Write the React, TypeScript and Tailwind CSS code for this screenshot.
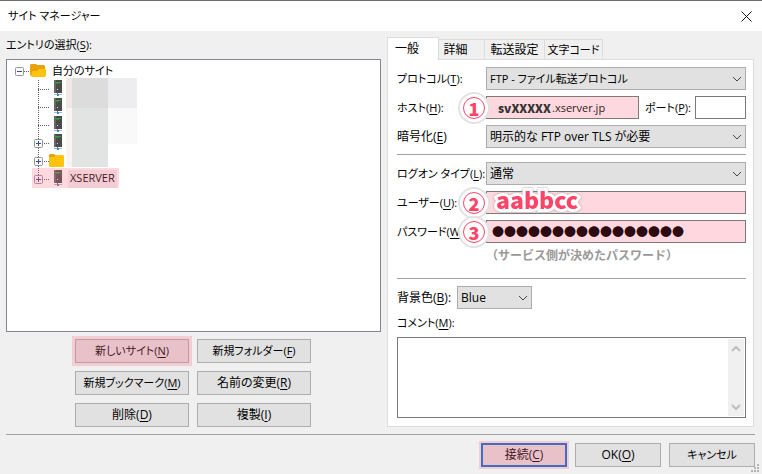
import type { ReactNode } from "react";

const PASSWORD = "●".repeat(16);

const Key = ({ children }: { children: string }) => (
  <>
    (<span className="underline underline-offset-2">{children}</span>)
  </>
);

const Mark = () => (
  <span className="pointer-events-none absolute -inset-1 bg-[#ff6482]/25" />
);

const Badge = ({ children }: { children: string }) => (
  <span className="absolute top-1/2 -left-7 z-10 flex size-8 -translate-y-1/2 items-center justify-center rounded-full border-2 border-[#e2e2e2] bg-white">
    <span className="flex size-[22px] items-center justify-center rounded-full border border-[#ff4468] font-['Noto_Sans_CJK_JP',sans-serif] text-[18px] leading-none font-black text-[#ff4468]">
      {children}
    </span>
  </span>
);

type SelectProps = { id: string; value: string; className?: string };

const Select = ({ id, value, className = "" }: SelectProps) => (
  <div className={`relative ${className}`}>
    <select
      id={id}
      className="block h-[23px] w-full appearance-none border border-[#adadad] bg-[#e1e1e1] pr-5 pl-[3px]"
    >
      <option>{value}</option>
    </select>
    <svg
      className="pointer-events-none absolute top-2 right-1 h-2 w-[10px]"
      viewBox="0 0 10 8"
      fill="none"
      stroke="#444"
    >
      <path d="M1 2l4 4 4-4" />
    </svg>
  </div>
);

type RowProps = {
  id: string;
  label: ReactNode;
  kana?: boolean;
  children: ReactNode;
};

const Row = ({ id, label, kana, children }: RowProps) => (
  <div className="flex h-[23px] items-center">
    <label
      htmlFor={id}
      className={`w-[89px] shrink-0 whitespace-nowrap ${kana ? "text-[11px]" : ""}`}
    >
      {label}
    </label>
    {children}
  </div>
);

type PushProps = {
  children: ReactNode;
  marked?: boolean;
  primary?: boolean;
  className?: string;
};

const PushButton = ({ children, marked, primary, className = "" }: PushProps) => (
  <button
    type="button"
    className={`relative h-6 whitespace-nowrap bg-[#e1e1e1] ${
      primary ? "border-2 border-[#0070d0]" : "border border-[#adadad]"
    } ${className}`}
  >
    {children}
    {marked && <Mark />}
  </button>
);

const ServerIcon = () => (
  <svg className="h-[18px] w-4" viewBox="0 0 16 18" shapeRendering="crispEdges">
    <path d="M4 0h8v13H4z" fill="#4b4b4b" />
    <path d="M4 0h2v13H4z" fill="#666" />
    <path d="M5 2h6v1H5z" fill="#35a13b" />
    <path d="M6 3h3v1H6z" fill="#2f8a35" />
    <path d="M7 9h1v1H7z" fill="#ddd" />
    <path d="M7 13h1v1H7z" fill="#777" />
    <path d="M4 14h8v1H4z" fill="#9bbdd4" />
    <path d="M7 14h2v2H7z" fill="#3e8cc4" />
  </svg>
);

const FolderIcon = () => (
  <svg className="-ml-px h-[18px] w-[17px]" viewBox="0 0 17 18">
    <path d="M0 3l1-1h4l1 1h7l1 1v10H0z" fill="#e8a30c" />
    <path d="M0 5h5l2-2h7l1 1v10l-1 1H1l-1-1z" fill="#ffc20e" />
  </svg>
);

const OpenFolderIcon = () => (
  <svg className="h-[18px] w-[17px]" viewBox="0 0 17 18">
    <path d="M0 3l1-1h5l1 1h7l1 1v10H1L0 13z" fill="#e8a30c" />
    <path d="M1 14l1-5h5l2-2h7v6l-1 2H2z" fill="#ffc20e" />
  </svg>
);

const Expander = ({ x, open }: { x: number; open?: boolean }) => (
  <g>
    <rect x={x + 0.5} y="5.5" width="8" height="8" rx="1" fill="#fafafa" stroke="#969696" />
    <path
      d={`M${x + 2} 9.500h5${open ? "" : `M${x + 4.5} 7v5`}`}
      stroke="#31519c"
    />
  </g>
);

type BranchProps = { expandable?: boolean; last?: boolean };

const Branch = ({ expandable, last }: BranchProps) => (
  <svg className="h-[18px] w-[18px]" viewBox="0 0 18 18">
    <path
      d={`M6.500 0v${last ? 10 : 18}M6 9.500h11`}
      stroke="#606060"
      strokeDasharray="1 1"
      fill="none"
    />
    {expandable && <Expander x={2} />}
  </svg>
);

const SiteTree = () => (
  <div className="relative h-[273px] border border-[#828790] bg-white pt-0.5 pl-2 text-[11px]">
    <div className="flex h-[18px] items-center">
      <svg className="h-[18px] w-[15px]" viewBox="0 0 15 18">
        <path d="M9 9.500h6" stroke="#606060" strokeDasharray="1 1" />
        <Expander x={0} open />
      </svg>
      <OpenFolderIcon />
      <span className="pl-[5px]">自分のサイト</span>
    </div>
    <ul className="pl-[17px]">
      {[false, false, false, true].map((expandable, i) => (
        <li key={i} className="flex h-[18px] items-center">
          <Branch expandable={expandable} />
          <ServerIcon />
        </li>
      ))}
      <li className="flex h-[18px] items-center">
        <Branch expandable />
        <FolderIcon />
      </li>
      <li className="relative flex h-[18px] w-[87px] items-center">
        <Branch expandable last />
        <ServerIcon />
        <span className="ml-0.5 bg-[#f0f0f0] px-0.5 pb-0.5 leading-4">XSERVER</span>
        <span className="pointer-events-none absolute inset-x-0 -top-0.5 bottom-0 bg-[#ff6482]/25" />
      </li>
    </ul>

    {/* Masked site names */}
    <div className="absolute top-[18px] left-[59px] grid grid-cols-[6px_36px_29px]">
      <span className="h-[30px] bg-[#f2e8e8]" />
      <span className="h-[30px] bg-[#dcdcdc]" />
      <span className="h-[30px] bg-[#ededef]" />
      <span className="h-[59px] bg-[#f7f4f2]" />
      <span className="h-[59px] bg-[#e2e4e3]" />
      <span className="h-9 bg-[#f9f9f9]" />
    </div>
  </div>
);

const Tabs = () => (
  <div className="flex h-[22px] items-end" role="tablist">
    <button
      type="button"
      role="tab"
      aria-selected="true"
      className="relative z-10 -mb-px h-[23px] w-[52px] border border-b-0 border-[#dcdcdc] bg-white pr-3"
    >
      一般
    </button>
    <button
      type="button"
      role="tab"
      className="h-5 w-[46px] border-t border-r border-[#dcdcdc] pr-3"
    >
      詳細
    </button>
    <button
      type="button"
      role="tab"
      className="h-5 w-[60px] border-t border-r border-[#dcdcdc] whitespace-nowrap"
    >
      転送設定
    </button>
    <button
      type="button"
      role="tab"
      className="h-5 w-[58px] border-t border-r border-[#dcdcdc] text-[11px] whitespace-nowrap"
    >
      文字コード
    </button>
  </div>
);

const GeneralPanel = () => (
  <div className="border border-[#dcdcdc] bg-white pt-[7px] pr-[7px] pb-2 pl-[9px]">
    <div className="flex flex-col gap-1.5">
      <Row id="protocol" kana label={<>プロトコル<Key>T</Key>:</>}>
        <Select
          id="protocol"
          value="FTP - ファイル転送プロトコル"
          className="flex-1 text-[11px]"
        />
      </Row>
      <Row id="host" kana label={<>ホスト<Key>H</Key>:</>}>
        <div className="relative min-w-0 flex-1">
          <Badge>1</Badge>
          <span className="pointer-events-none absolute top-0 left-3 font-['Noto_Sans_CJK_JP',sans-serif] text-[12px] leading-[23px] font-black text-[#333]">
            svXXXXX
          </span>
          <input
            id="host"
            defaultValue=".xserver.jp"
            className="block h-[23px] w-full border border-[#7a7a7a] bg-[#ffd8df] pl-[65px] text-[11px] text-[#2e1a20]"
          />
        </div>
        <label
          htmlFor="port"
          className="ml-1.5 w-[50px] shrink-0 text-[11px] whitespace-nowrap"
        >
          ポート<Key>P</Key>:
        </label>
        <input
          id="port"
          className="h-[23px] w-[51px] border border-[#7a7a7a] bg-white px-1"
        />
      </Row>
      <Row id="encryption" label={<>暗号化<Key>E</Key></>}>
        <Select id="encryption" value="明示的な FTP over TLS が必要" className="flex-1" />
      </Row>
    </div>

    <hr className="mt-1.5 mb-[7px] border-[#a0a0a0]" />

    <div className="flex flex-col gap-1.5">
      <Row id="logon" kana label={<>ログオン タイプ<Key>L</Key>:</>}>
        <Select id="logon" value="通常" className="flex-1" />
      </Row>
      <Row id="user" kana label={<>ユーザー<Key>U</Key>:</>}>
        <div className="relative flex-1">
          <Badge>2</Badge>
          <span className="pointer-events-none absolute -top-1 left-2.5 font-['Noto_Sans_CJK_JP',sans-serif] text-[23px] leading-6 font-black text-[#ff4468] drop-shadow-[0_0_1px_#999] [-webkit-text-stroke:6px_white] [paint-order:stroke_fill]">
            aabbcc
          </span>
          <input
            id="user"
            className="block h-[23px] w-full border border-[#7a7a7a] bg-[#ffd8df] px-1"
          />
        </div>
      </Row>
      <Row id="password" kana label={<>パスワード<Key>W</Key></>}>
        <div className="relative flex-1">
          <Badge>3</Badge>
          <input
            id="password"
            defaultValue={PASSWORD}
            className="block h-[23px] w-full border border-[#7a7a7a] bg-[#ffd8df] pl-[5px] font-['Noto_Sans_CJK_JP',sans-serif] text-[#2e0a12] [font-feature-settings:normal]"
          />
        </div>
      </Row>
    </div>
    <p className="pl-[89px] font-['Noto_Sans_CJK_JP',sans-serif] text-[12px] leading-6 font-bold text-[#999] [font-feature-settings:normal]">
      （サービス側が決めたパスワード）
    </p>

    <hr className="mt-[11px] mb-[7px] border-[#a0a0a0]" />

    <div className="flex items-center">
      <label htmlFor="color" className="w-[60px] whitespace-nowrap">
        背景色<Key>B</Key>:
      </label>
      <Select id="color" value="Blue" className="w-[75px]" />
    </div>
    <label htmlFor="comment" className="mt-1 mb-1 block text-[11px] leading-5">
      コメント<Key>M</Key>:
    </label>
    <div className="flex h-[81px] border border-[#7a7a7a] p-px">
      <textarea id="comment" className="min-w-0 flex-1 resize-none bg-white outline-none" />
      <svg
        className="h-full w-4 bg-[#f0f0f0]"
        viewBox="0 0 16 77"
        fill="none"
        stroke="#bfbfbf"
        strokeWidth="2"
      >
        <path d="M4 12l4-4 4 4" />
        <path d="M4 66l4 4 4-4" />
      </svg>
    </div>
  </div>
);

export default function App() {
  return (
    <div className="relative min-h-screen border-t border-[#6d6d6d] bg-[#f0f0f0] font-['Open_Sans','Noto_Sans_CJK_JP',sans-serif] text-[12px] leading-4 text-black [font-feature-settings:'palt']">
      <header className="flex h-[30px] items-center justify-between bg-white pr-2.5 pl-2">
        <h1 className="text-[11px]">サイト マネージャー</h1>
        <button type="button" aria-label="閉じる">
          <svg className="size-[11px]" viewBox="0 0 11 11" stroke="#111" fill="none">
            <path d="M.5.5l10 10M10.500.5l-10 10" />
          </svg>
        </button>
      </header>

      <main className="grid grid-cols-[375fr_367fr] gap-1.5 pt-1.5 pr-2 pl-1.5">
        <section className="min-w-0">
          <h2 className="h-[22px] text-[11px]">
            エントリの選択<Key>S</Key>:
          </h2>
          <SiteTree />
          <div className="mt-[7px] grid grid-cols-[114px_114px] justify-center gap-2 pr-px">
            <PushButton marked className="text-[11px]">新しいサイト<Key>N</Key></PushButton>
            <PushButton className="text-[11px]">新規フォルダー<Key>F</Key></PushButton>
            <PushButton className="text-[11px]">新規ブックマーク<Key>M</Key></PushButton>
            <PushButton>名前の変更<Key>R</Key></PushButton>
            <PushButton>削除<Key>D</Key></PushButton>
            <PushButton>複製<Key>I</Key></PushButton>
          </div>
        </section>
        <section className="min-w-0">
          <Tabs />
          <GeneralPanel />
        </section>
      </main>

      <footer className="mt-[7px] mr-[7px] ml-1.5 flex justify-end gap-2 border-t border-[#a0a0a0] pt-2">
        <PushButton primary marked className="w-[86px]">接続<Key>C</Key></PushButton>
        <PushButton className="w-[86px]">OK<Key>O</Key></PushButton>
        <PushButton className="w-[86px] text-[11px]">キャンセル</PushButton>
      </footer>
      <svg className="absolute right-[3px] bottom-0.5 size-2" viewBox="0 0 8 8" fill="#b4b4b4">
        <path d="M6 0h2v2H6zM3 3h2v2H3zM6 3h2v2H6zM0 6h2v2H0zM3 6h2v2H3zM6 6h2v2H6z" />
      </svg>
    </div>
  );
}
